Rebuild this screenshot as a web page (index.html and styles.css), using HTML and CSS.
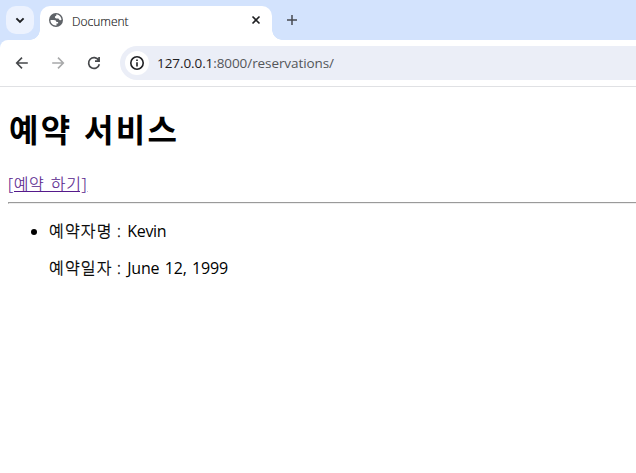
FILE: index.html
```html
<!DOCTYPE html>
<html lang="ko">
<head>
<meta charset="utf-8">
<title>Document</title>
<link rel="stylesheet" href="styles.css">
</head>
<body>
<header class="browser">
  <div class="tabstrip">
    <button class="tab-search" aria-label="Search tabs"><svg width="28" height="28" viewBox="0 0 28 28"><path d="M10.4 12.3L14 15.9l3.6-3.6" fill="none" stroke="#1f2023" stroke-width="1.9"/></svg></button>
    <div class="tab">
      <svg class="globe" width="16" height="16" viewBox="0 0 16 16"><circle cx="8" cy="8" r="7" fill="#5f6368"/><path d="M8.2 2.6h1.1c2.5.7 4.1 2.6 4.2 5.2-.6.5-1.4.5-2 .1-.6-.4-.5-1.4-1.3-1.5H8.4c-.9-.1-1.5-.6-1.5-1.4 0-.7.4-1 1.3-1.1zM2.5 8h3.4c1.7 0 2.5.8 2.5 2h1.7v1.6H8.5v1.8C5 13.8 2.3 11.2 2.5 8z" fill="#fff"/></svg>
      <span class="tab-title">Document</span>
      <svg class="close" width="16" height="16" viewBox="0 0 16 16"><path d="M4.5 4.5l7 7m0-7l-7 7" stroke="#1f2023" stroke-width="1.6"/></svg>
    </div>
    <svg class="new-tab" width="16" height="16" viewBox="0 0 16 16"><path d="M8 3v10M3 8h10" stroke="#474a50" stroke-width="1.5"/></svg>
  </div>
  <div class="toolbar">
    <svg width="16" height="16" viewBox="0 0 16 16"><path d="M13.8 8H3M8 2.6L2.7 8 8 13.4" fill="none" stroke="#46484b" stroke-width="1.6"/></svg>
    <svg width="16" height="16" viewBox="0 0 16 16"><path d="M2.2 8H13M8 2.6L13.3 8 8 13.4" fill="none" stroke="#a8a9aa" stroke-width="1.6"/></svg>
    <svg width="16" height="16" viewBox="0 0 16 16"><path d="M12.7 5.3A5.4 5.4 0 1 0 13.3 9.2M13.1 2v4.1H9" fill="none" stroke="#46484b" stroke-width="1.7"/></svg>
    <div class="address">
      <span class="site-info"><svg width="16" height="16" viewBox="0 0 16 16"><circle cx="8" cy="8" r="6.2" fill="none" stroke="#1f2023" stroke-width="1.6"/><path d="M8 7.2v4.2M8 4.5v1.6" stroke="#1f2023" stroke-width="1.6"/></svg></span>
      <span class="url"><span class="host">127.0.0.1</span>:8000/reservations/</span>
    </div>
  </div>
</header>
<main>
  <h1>예약 서비스</h1>
  <a href="#">[예약 하기]</a>
  <hr>
  <ul>
    <li><p><span class="label">예약자명 :</span> <span class="name">Kevin</span></p><p><span class="label">예약일자 :</span> <span class="date">June 12, 1999</span></p></li>
  </ul>
</main>
</body>
</html>
```
FILE: styles.css
```css
* { box-sizing: border-box; }
body { margin: 0; height: 473px; overflow: hidden; background: #fff; color: #000; font: 16px "Open Sans", "Noto Sans CJK KR", sans-serif; }
svg { display: block; flex: none; }
.browser { height: 87px; background: #d3e3fd; }
.tabstrip { display: flex; height: 40px; padding: 6px 0 0 6px; }
.tab-search { width: 28px; height: 28px; padding: 0; border: 0; border-radius: 10px; background: #ecf2fe; }
.tab { position: relative; display: flex; width: 232px; height: 34px; margin-left: 6px; padding: 0 8px; align-items: flex-start; border-radius: 10px 10px 0 0; background: #fff; }
.tab::before, .tab::after { content: ""; position: absolute; bottom: 0; width: 10px; height: 10px; }
.tab::before { left: -10px; background: radial-gradient(circle at 0 0, transparent 9.5px, #fff 10px); }
.tab::after { right: -10px; background: radial-gradient(circle at 100% 0, transparent 9.5px, #fff 10px); }
.globe { margin-top: 6px; }
.tab-title { margin-left: 8px; flex: 1; font-size: 12px; line-height: 31px; color: #111; font-weight: 300; -webkit-text-stroke: .15px #222; }
.close { margin-top: 6px; }
.new-tab { margin: 6px 0 0 12px; }
.toolbar { display: flex; height: 47px; align-items: center; gap: 20px; padding-left: 14px; border-bottom: 1px solid #e0e1e4; border-top-left-radius: 8px; background: #fff; }
.address { display: flex; flex: 1; height: 34px; margin-left: -2px; padding-left: 5px; align-items: center; border-radius: 17px 0 0 17px; background: #ebeef7; }
.site-info { display: grid; width: 24px; height: 24px; place-items: center; border-radius: 50%; background: #fff; }
.url { margin-left: 8px; color: #54565a; font-size: 13.5px; line-height: 20px; letter-spacing: -.08px; }
.host { color: #1f2023; }
main { padding: 0 0 0 8px; }
h1 { margin: 21px 0 0 1px; font-size: 32px; line-height: 43px; font-weight: 700; letter-spacing: 2.3px; word-spacing: 1px; }
a { display: block; width: max-content; margin-top: 23px; line-height: 21px; color: #551a8b; font-weight: 300; letter-spacing: .65px; word-spacing: 1.5px; -webkit-text-stroke: .15px #551a8b; }
hr { height: 2px; margin: 7px 0 0; border: solid; border-width: 1px 0 1px 1px; border-color: #9a9a9a #eee #eee #9a9a9a; }
ul { margin: 16px 0 0; padding-left: 41px; }
p { margin: 0 0 16px; line-height: 21px; }
.label { font-weight: 300; letter-spacing: 1.2px; word-spacing: -1px; -webkit-text-stroke: .35px #000; }
.name { margin-left: 1px; letter-spacing: -.3px; }
.date { margin-left: 1px; word-spacing: 1.5px; letter-spacing: -.2px; }
```
